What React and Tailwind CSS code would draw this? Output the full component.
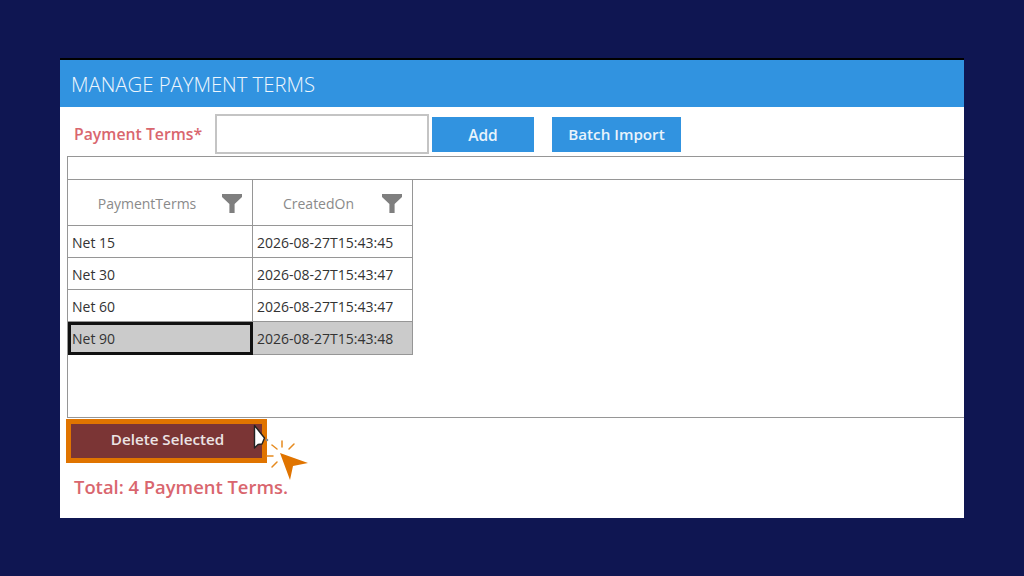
const ROWS = [
  ['Net 15', '2026-08-27T15:43:45'],
  ['Net 30', '2026-08-27T15:43:47'],
  ['Net 60', '2026-08-27T15:43:47'],
  ['Net 90', '2026-08-27T15:43:48'],
];

function FilterIcon() {
  return (
    <svg width="20" height="19" viewBox="0 0 20 19" className="shrink-0">
      <path d="M0 0H20V3L12.6 10V19H7.4V10L0 3Z" fill="#7f7f7f" />
    </svg>
  );
}

function HeaderCell({ label, width, pad }) {
  return (
    <div className={`${width} ${pad} h-[46px] relative flex items-center justify-center border-r border-b border-[#969696] pt-[1px] text-[14px] text-[#8a8a8a]`}>
      {label}
      <div className="absolute right-[10px] top-[14px]">
        <FilterIcon />
      </div>
    </div>
  );
}

function Row({ row, selected }) {
  return (
    <div className={`flex text-[14px] text-[#333333] ${selected ? 'h-[33px]' : 'h-[32px]'}`}>
      {selected ? (
        <div className="w-[185px] pl-[1px] flex items-center border-[3px] border-[#111111] bg-[#cbcbcb]">{row[0]}</div>
      ) : (
        <div className="w-[185px] pl-[4px] pt-[1px] flex items-center border-r border-b border-[#969696]">{row[0]}</div>
      )}
      <div className={`w-[160px] pl-[4px] pt-[1px] flex items-center border-r border-b border-[#969696] ${selected ? 'bg-[#cbcbcb]' : ''}`}>
        {row[1]}
      </div>
    </div>
  );
}

function ClickCursor() {
  return (
    <svg width="66" height="60" viewBox="0 0 66 60" className="absolute left-[250px] top-[424px]">
      <path d="M4.5 1.5V24L8 20.5L12 20L14.5 14L4.5 1.5Z" fill="#ffffff" stroke="#222222" strokeWidth="1.4" strokeLinejoin="round" />
      <circle cx="17" cy="16" r="1.3" fill="#8a8a8a" />
      <path d="M30 29L58 39L43 42L40 56Z" fill="#e07400" />
      <g stroke="#e68a1e" strokeWidth="1.5" strokeLinecap="round">
        <path d="M22 21L27 25" />
        <path d="M32 17V23" />
        <path d="M44 20L39 25" />
        <path d="M17 32H23" />
        <path d="M22 43L27 38" />
      </g>
    </svg>
  );
}

export default function App() {
  return (
    <div className="relative w-[1024px] h-[576px] overflow-hidden bg-[#0f1652] pl-[60px] pt-[58px] font-['Open_Sans','Noto_Sans',sans-serif]">
      <div className="w-[904px] h-[460px] bg-white border-t-2 border-black flex flex-col overflow-hidden">
        <div className="h-[47px] shrink-0 bg-[#3193e0] pl-[11px] pt-[2px] flex items-center text-[20.3px] font-light text-[#eef6fd]">
          MANAGE PAYMENT TERMS
        </div>

        <div className="h-[49px] shrink-0 flex items-start">
          <div className="ml-[14px] w-[141px] h-[56px] flex items-center text-[15.8px] font-semibold text-[#d9666e]">
            Payment Terms*
          </div>
          <input className="mt-[7px] w-[214px] h-[40px] border-2 border-[#c4c4c4] bg-white" />
          <button className="mt-[10px] ml-[3px] w-[102px] h-[35px] bg-[#3193e0] pt-[2px] text-[15.5px] font-semibold text-[#e8f3fc]">
            Add
          </button>
          <button className="mt-[10px] ml-[18px] w-[129px] h-[35px] bg-[#3193e0] text-[15.2px] font-semibold text-[#e8f3fc]">
            Batch Import
          </button>
        </div>

        <div className="ml-[7px] w-[920px] h-[262px] shrink-0 border border-[#969696]">
          <div className="h-[23px] border-b border-[#969696]" />
          <div className="flex">
            <HeaderCell label="PaymentTerms" width="w-[185px]" pad="pr-[26px]" />
            <HeaderCell label="CreatedOn" width="w-[160px]" pad="pr-[28px]" />
          </div>
          {ROWS.map((row, i) => (
            <Row key={row[0]} row={row} selected={i === 3} />
          ))}
        </div>

        <button className="ml-[6px] mt-[1px] w-[201px] h-[44px] shrink-0 border-[5px] border-[#e07400] bg-[#7b3535] pb-[4px] pl-[2px] text-[15.2px] font-semibold text-[#ece4e4]">
          Delete Selected
        </button>

        <div className="ml-[14px] mt-[10px] text-[18.4px] font-semibold text-[#d9666e]">Total: 4 Payment Terms.</div>
      </div>
      <ClickCursor />
    </div>
  );
}
